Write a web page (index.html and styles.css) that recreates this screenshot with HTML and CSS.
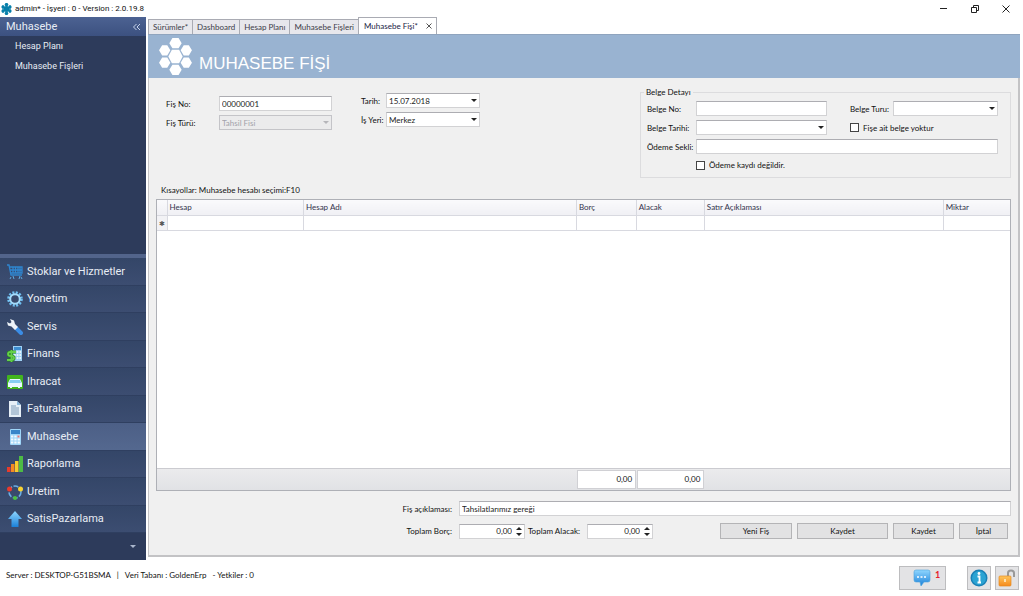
FILE: index.html
```html
<!DOCTYPE html>
<html lang="tr">
<head>
<meta charset="utf-8">
<title>admin* - İşyeri : 0 - Version : 2.0.19.8</title>
<link rel="stylesheet" href="styles.css">
</head>
<body>
<svg class="defs" aria-hidden="true">
  <defs>
    <linearGradient id="blue" x2="0" y2="1"><stop offset="0" stop-color="#8fd6ff"/><stop offset="1" stop-color="#1a80d8"/></linearGradient>
    <linearGradient id="orange" x2="0" y2="1"><stop offset="0" stop-color="#ffc65c"/><stop offset="1" stop-color="#f58a1c"/></linearGradient>
    <symbol id="hexes" viewBox="0 0 32 36">
      <path d="M12.500 11.500h7L23 18l-3.500 6.500h-7L9 18z"/>
      <path d="M13 0h6l3 5-3 5h-6l-3-5zM13 26h6l3 5-3 5h-6l-3-5zM3 7h5l3 5-3 5H3l-3-5zM3 19h5l3 5-3 5H3l-3-5zM24 7h5l3 5-3 5h-5l-3-5zM24 19h5l3 5-3 5h-5l-3-5z"/>
    </symbol>
  </defs>
</svg>
<header class="titlebar">
  <svg class="app-icon" viewBox="0 0 32 36" fill="#087faa"><circle cx="16" cy="18" r="9"/><use href="#hexes"/></svg>
  <span class="title">admin* - İşyeri : 0 - Version : 2.0.19.8</span>
  <button class="win" aria-label="Simge durumu"><svg viewBox="0 0 8 8"><path d="M0 3.500h7"/></svg></button>
  <button class="win" aria-label="Geri yükle"><svg viewBox="0 0 8 8"><path d="M.5 2.500h5v5h-5zM2.500 2.500v-2h5v5h-2"/></svg></button>
  <button class="win" aria-label="Kapat"><svg viewBox="0 0 8 8"><path d="M.5.500l7 7M7.500.500l-7 7"/></svg></button>
</header>

<div class="workspace">
  <nav class="sidebar">
    <div class="side-head"><span>Muhasebe</span><button class="collapse" aria-label="Daralt"><svg viewBox="0 0 8 8"><path d="M3.500 1l-3 3 3 3M7 1L4 4l3 3"/></svg></button></div>
    <div class="side-links">
      <a href="#hesap">Hesap Planı</a>
      <a href="#fisler">Muhasebe Fişleri</a>
    </div>
    <div class="modules">
      <a href="#stok"><svg viewBox="0 0 16 16"><path d="M0 1h2l2 10h11M2.500 3H15v6H4M6 3v6M8.500 3v6M11 3v6M13 3v6M3 6h12" fill="none" stroke="#2f86d0" stroke-width="1.300"/><path d="M4 13l-1 2M6 12l1 3M13 12l-1 3M14 13l1 2" stroke="#5ba9e0"/></svg>Stoklar ve Hizmetler</a>
      <a href="#yonetim"><svg viewBox="0 0 16 16" fill="none"><circle cx="8" cy="8" r="6.500" stroke="#6fc0f2" stroke-width="2.600" stroke-dasharray="2 1.400"/><circle cx="8" cy="8" r="4.800" stroke="#a5dcfb" stroke-width="2"/></svg>Yonetim</a>
      <a href="#servis"><svg viewBox="0 0 16 16"><path d="M9 9l5 5" stroke="#3b8de6" stroke-width="4" stroke-linecap="round"/><path d="M3 0l4 1.500 1 3.500 3 3-3 3-3.500-3.500L1 6.500 0 3l3 1.500L4.500 3z" fill="#eef3f8"/></svg>Servis</a>
      <a href="#finans"><svg viewBox="0 0 16 16"><path d="M6 0h9v15H6z" fill="#9fd0f3"/><path d="M7 1h7v3H7z" fill="#3d8ed2"/><path d="M7 6h7M7 9h7M7 12h7" stroke="#fff" stroke-width="1.500" stroke-dasharray="1.700 1"/><path d="M9 6H3.500Q1 6 1 8t3 2 3 2-3 2H0M4.500 4v12" fill="none" stroke="#247d22" stroke-width="3.200"/><path d="M9 6H3.500Q1 6 1 8t3 2 3 2-3 2H0M4.500 4v12" fill="none" stroke="#65cf4a" stroke-width="1.800"/></svg>Finans</a>
      <a href="#ihracat"><svg viewBox="0 0 16 16"><rect y="1" width="16" height="14" rx="1" fill="#42b51e"/><path d="M3 5h10l2 4v4h-2v1h-2v-1H5v1H3v-1H1V9z" fill="#e8f8ff"/><path d="M3 6h10l1 3H2z" fill="#86cdf2"/></svg>Ihracat</a>
      <a href="#faturalama"><svg viewBox="0 0 16 16"><path d="M2 0h8l4 4v12H2z" fill="#e6eff7"/><path d="M10 0v4h4z" fill="#8bb8dc"/><path d="M4 5h5M4 7h8M4 9h8M4 11h8M4 13h8" stroke="#7f9cb8"/></svg>Faturalama</a>
      <a href="#muhasebe" class="active" aria-current="page"><svg viewBox="0 0 16 16"><rect x="3" width="11" height="16" rx="1" fill="#9fd5f8"/><path d="M4 1h9v4H4z" fill="#3985c9"/><path d="M4 7.500h9M4 10.500h9M4 13.500h9" stroke="#f3faff" stroke-width="2" stroke-dasharray="2.300 1"/><path d="M10.500 6.500h2v2h-2z" fill="#e57676"/></svg>Muhasebe</a>
      <a href="#raporlama"><svg viewBox="0 0 16 16"><path d="M0 11h3.500v5H0z" fill="#e63c2c"/><path d="M4 8h3.500v8H4z" fill="#f48a21"/><path d="M8 5h3.500v11H8z" fill="#f7cb2e"/><path d="M12 0h4v16h-4z" fill="#4dbb45"/></svg>Raporlama</a>
      <a href="#uretim"><svg viewBox="0 0 16 16"><circle cx="8" cy="8" r="6" fill="none" stroke="#6aaee5" stroke-width="1.600" stroke-dasharray="5 1.500"/><circle cx="2.500" cy="5" r="2.500" fill="#e93a2d"/><circle cx="13.500" cy="5" r="2.500" fill="#f8d332"/><circle cx="8" cy="14" r="2" fill="#4cc13f"/></svg>Uretim</a>
      <a href="#satis"><svg viewBox="0 0 16 16"><path d="M8 0l7 8h-3.500v8h-7V8H1z" fill="url(#blue)"/></svg>SatisPazarlama</a>
    </div>
    <div class="side-foot"><button class="more" aria-label="Diğer"></button></div>
  </nav>

  <main class="content">
    <div class="tabs" role="tablist">
      <button role="tab">Sürümler*</button>
      <button role="tab">Dashboard</button>
      <button role="tab">Hesap Planı</button>
      <button role="tab">Muhasebe Fişleri</button>
      <button role="tab" class="current" aria-selected="true">Muhasebe Fişi*<svg viewBox="0 0 6 6"><path d="M.5.500l5 5M5.500.500l-5 5"/></svg></button>
    </div>
    <div class="banner">
      <svg viewBox="0 0 32 36" fill="#fff"><use href="#hexes"/></svg>
      <h1>MUHASEBE FİŞİ</h1>
    </div>
    <form class="panel">
      <div class="top">
        <div class="fields main-fields">
          <label for="no">Fiş No:</label><input id="no" value="00000001">
          <label for="tur">Fiş Türü:</label><span class="combo off"><select id="tur" disabled><option>Tahsil Fisi</option></select></span>
        </div>
        <div class="fields date-fields">
          <label for="tarih">Tarih:</label><span class="combo"><select id="tarih"><option>15.07.2018</option></select></span>
          <label for="yer">İş Yeri:</label><span class="combo"><select id="yer"><option>Merkez</option></select></span>
        </div>
        <fieldset class="detail">
          <legend>Belge Detayı</legend>
          <label for="bno">Belge No:</label><input id="bno">
          <label for="bturu" class="second">Belge Turu:</label><span class="combo"><select id="bturu"><option></option></select></span>
          <label for="btar">Belge Tarihi:</label><span class="combo"><select id="btar"><option></option></select></span>
          <label class="check second wide"><input type="checkbox">Fişe ait belge yoktur</label>
          <label for="odeme">Ödeme Sekli:</label><input id="odeme" class="span">
          <label class="check below"><input type="checkbox">Ödeme kaydı değildir.</label>
        </fieldset>
      </div>
      <p class="hint">Kısayollar: Muhasebe hesabı seçimi:F10</p>
      <div class="grid">
        <table>
          <colgroup><col class="c-mark"><col class="c-code"><col class="c-name"><col class="c-debit"><col class="c-credit"><col class="c-note"><col></colgroup>
          <thead><tr><th></th><th>Hesap</th><th>Hesap Adı</th><th>Borç</th><th>Alacak</th><th>Satır Açıklaması</th><th>Miktar</th></tr></thead>
          <tbody><tr><td class="mark">✱</td><td></td><td></td><td></td><td></td><td></td><td></td></tr></tbody>
        </table>
        <div class="totals"><output class="debit">0,00</output><output>0,00</output></div>
      </div>
      <div class="note-row">
        <label for="acik">Fiş açıklaması:</label><input id="acik" value="Tahsilatlarımız gereği">
      </div>
      <div class="bottom">
        <label for="tb">Toplam Borç:</label>
        <span class="spin"><input id="tb" value="0,00"><span><button type="button" class="up" aria-label="Artır"></button><button type="button" class="down" aria-label="Azalt"></button></span></span>
        <label for="ta">Toplam Alacak:</label>
        <span class="spin"><input id="ta" value="0,00"><span><button type="button" class="up" aria-label="Artır"></button><button type="button" class="down" aria-label="Azalt"></button></span></span>
        <div class="actions">
          <button type="button" class="b-new">Yeni Fiş</button>
          <button type="button" class="b-save">Kaydet</button>
          <button type="button" class="b-save2">Kaydet</button>
          <button type="button" class="b-cancel">İptal</button>
        </div>
      </div>
    </form>
  </main>
</div>

<footer class="status">
  <span>Server : DESKTOP-G51BSMA</span><span>|</span><span>Veri Tabanı : GoldenErp</span><span>- Yetkiler : 0</span>
  <button class="msg" aria-label="Mesajlar"><svg viewBox="0 0 18 18"><path d="M3 1h12q2 0 2 2v8q0 2-2 2h-4l-3 4-1-4H3q-2 0-2-2V3q0-2 2-2z" fill="url(#blue)" stroke="#4aa3dc" stroke-width=".6"/><path d="M4 8h10" stroke="#fff" stroke-width="1.500" stroke-dasharray="2 1.500"/></svg><b>1</b></button>
  <button class="sq info" aria-label="Bilgi"><svg viewBox="0 0 18 18"><circle cx="9" cy="9" r="8.500" fill="#197fb5"/><circle cx="9" cy="9" r="7" fill="#2ba3d3"/><circle cx="9" cy="4.500" r="1.400" fill="#fff"/><path d="M7.500 7.500h2v5.500M7.500 13.500h3.500" stroke="#fff" stroke-width="1.800" fill="none"/></svg></button>
  <button class="sq" aria-label="Kilit"><svg viewBox="0 0 18 18"><path d="M10 8V4q0-2.500 3-2.500T16 4v4" fill="none" stroke="#999" stroke-width="2"/><rect x="1" y="7" width="12" height="10" rx="1" fill="url(#orange)" stroke="#e58a20" stroke-width=".7"/><path d="M7 10v3" stroke="#fff2d5" stroke-width="1.500"/></svg></button>
</footer>
</body>
</html>
```

FILE: styles.css
```css
* { box-sizing: border-box; }

body {
  margin: 0;
  height: 100vh;
  display: flex;
  flex-direction: column;
  background: #fff;
  color: #111;
  font: 8px/10px Lato, "Liberation Sans", sans-serif;
}

button, input, select { font: inherit; color: inherit; margin: 0; padding: 0; border-radius: 0; }
button { border: 0; background: none; }
a { color: inherit; text-decoration: none; }
label { white-space: nowrap; }
svg { flex: none; }
.defs { position: absolute; width: 0; height: 0; }

/* window title */
.titlebar { display: flex; align-items: center; height: 17px; padding: 0 2px 0 1px; flex: none; }
.app-icon { width: 11px; height: 12px; margin-right: 3px; }
.title { flex: 1; font-family: Roboto, sans-serif; font-size: 8px; }
.win { width: 31px; height: 17px; display: grid; place-items: center; }
.win svg { width: 8px; height: 8px; fill: none; stroke: #222; }

.workspace { flex: 1; min-height: 0; display: flex; }

/* sidebar */
.sidebar {
  width: 146px;
  flex: none;
  display: flex;
  flex-direction: column;
  background: #2d3b5b;
  color: #e8edf5;
  font-family: Roboto, sans-serif;
}
.side-head {
  display: flex;
  align-items: center;
  justify-content: space-between;
  height: 19px;
  padding: 0 5px 0 6px;
  background: linear-gradient(#4c6292, #3c5180);
  font-size: 11px;
}
.collapse { display: grid; }
.collapse svg { width: 8px; height: 8px; fill: none; stroke: #c6d3ea; }
.side-links { flex: 1; padding-left: 15px; font-size: 9px; }
.side-links a { display: block; line-height: 20px; }
.modules { border-top: 4px solid #52648b; font-size: 11px; }
.modules a {
  display: flex;
  align-items: center;
  gap: 4px;
  height: 28px;
  padding-left: 7px;
  border-bottom: 1px solid #2f3f60;
  background: linear-gradient(#344668, #3c4d71);
}
.modules a:nth-child(even) { height: 27px; }
.modules a.active { background: linear-gradient(#4c5f86, #54688f); }
.modules svg { width: 16px; height: 16px; }
.side-foot { height: 27px; display: flex; align-items: center; justify-content: flex-end; padding-right: 10px; }
.more { border: solid transparent; border-width: 3px 3px 0; border-top-color: #aab6cc; }

/* tabs and banner */
.content { flex: 1; min-width: 0; display: flex; flex-direction: column; padding: 0 3px 3px 2px; }
.tabs { display: flex; align-items: flex-end; height: 17px; flex: none; }
.tabs button {
  height: 15px;
  padding: 0 4px;
  border: 1px solid #a9abb3;
  border-bottom: 0;
  margin-right: -1px;
  background: #e7e7ec;
  color: #3c3c48;
}
.tabs .current { height: 17px; background: #fff; color: #222244; display: flex; align-items: center; gap: 8px; padding: 0 4px 0 5px; }
.tabs svg { width: 6px; height: 6px; stroke: #555; stroke-width: 1; }
.banner { display: flex; height: 44px; flex: none; padding: 3px 11px; gap: 7px; background: #99b3d1; border-top: 1px solid #8fa4be; }
.banner svg { width: 33px; height: 37px; }
h1 { margin: 0; align-self: flex-end; color: #fff; font: 17px/22px "Liberation Sans", sans-serif; }

/* voucher form */
.panel {
  flex: 1;
  min-height: 0;
  display: flex;
  flex-direction: column;
  padding: 9px 7px 16px 7px;
  background: #f0f0f0;
  border: solid #c3c3c5;
  border-width: 0 2px 2px 1px;
}
.panel input:not([type]), .panel select {
  width: 100%;
  height: 15px;
  min-width: 0;
  padding: 0 2px;
  border: 1px solid #d2d2d4;
  border-top-color: #adadb2;
  background: #fff;
  color: #222;
  appearance: none;
}
.combo { display: grid; position: relative; }
.combo::after {
  content: "";
  position: absolute;
  right: 3px;
  top: 6px;
  border: solid transparent;
  border-width: 3px 3px 0;
  border-top-color: #222;
}
.combo.off::after { border-top-color: #b5b5b9; }
.panel .off select { background: #ebebec; border-color: #c4c4c8; color: #a2a2aa; opacity: 1; }

.top { display: flex; align-items: flex-start; }
.fields { display: grid; row-gap: 4px; align-items: center; }
.main-fields { grid-template-columns: 53px 113px; margin: 9px 0 0 10px; }
.date-fields { grid-template-columns: 25px 94px; margin: 6px 0 0 29px; }
.detail {
  display: grid;
  grid-template-columns: 49px 131px 1fr 105px;
  row-gap: 4px;
  align-items: center;
  width: 371px;
  margin: 0 0 0 auto;
  padding: 4px 12px 7px 6px;
  border: 1px solid #dcdcde;
}
legend { padding: 0 2px; margin-left: -3px; }
.second { padding-left: 23px; }
.wide { grid-column: span 2; }
.span { grid-column: span 3; }
.below { grid-column: 2 / span 3; padding-top: 2px; }
.check { display: flex; align-items: center; gap: 4px; }
.check input { appearance: none; width: 9px; height: 9px; border: 1px solid #444; background: #fff; }
.hint { margin: 7px 0 4px 5px; }

/* entry grid */
.grid { flex: 1; min-height: 0; display: flex; flex-direction: column; justify-content: space-between; background: #fff; border: 1px solid #aeb0b6; }
table { width: 100%; table-layout: fixed; border-collapse: collapse; }
.c-mark { width: 10px; }
.c-code { width: 16%; }
.c-name { width: 32%; }
.c-debit { width: 7%; }
.c-credit { width: 8%; }
.c-note { width: 28%; }
th, td { height: 15px; padding: 0 2px; border: solid #d8d9e0; border-width: 0 0 1px 1px; }
th:first-child, td:first-child { border-left: 0; }
th { text-align: left; font-weight: normal; color: #33334c; background: linear-gradient(#fafafc, #f0f0f4); }
.mark { padding: 0; text-align: center; font-size: 7px; color: #555; background: #f2f2f5; }
.totals {
  display: grid;
  grid-template-columns: 10px 16% 32% 7% 8%;
  height: 22px;
  padding: 1px 0;
  border-top: 1px solid #cbcbd0;
  background: linear-gradient(#ebebed, #e1e2e5);
}
.totals output { margin-left: 1px; padding-right: 3px; line-height: 17px; text-align: right; background: #fff; border: 1px solid #d0d0d4; }
.debit { grid-column: 4; }

.note-row { display: grid; grid-template-columns: 303px 1fr; align-items: center; margin-top: 10px; }
.note-row label, .bottom > label { text-align: right; padding-right: 7px; }
.bottom { display: grid; grid-template-columns: 303px 66px 62px 66px 1fr; align-items: center; margin-top: 7px; }
.spin { position: relative; display: grid; }
.panel .spin input { padding-right: 12px; text-align: right; }
.spin span { position: absolute; right: 3px; top: 3px; display: grid; gap: 3px; }
.spin button { border: solid transparent; border-width: 0 3px; }
.spin .up { border-bottom: 3px solid #222; }
.spin .down { border-top: 3px solid #222; }
.actions { display: flex; justify-content: flex-end; padding-right: 3px; }
.actions button { height: 16px; border: 1px solid #b4b4b6; background: #e2e2e3; }
.b-new { width: 72px; margin-right: 5px; }
.b-save { width: 91px; margin-right: 5px; }
.b-save2 { width: 61px; margin-right: 5px; }
.b-cancel { width: 49px; }

/* status bar */
.status { display: flex; align-items: center; height: 36px; flex: none; gap: 6px; padding: 0 4px 6px 6px; }
.status button { height: 24px; margin-top: 6px; border: 1px solid #bdbdbf; background: #e3e3e5; }
.status svg { width: 18px; height: 18px; }
.msg { display: flex; align-items: center; width: 47px; margin-left: auto; padding-left: 13px; gap: 4px; }
.msg b { color: #e8232a; font-size: 9px; align-self: flex-start; line-height: 16px; }
.sq { width: 24px; display: grid; place-items: center; }
.info { margin-left: 15px; }
.sq + .sq { margin-left: -2px; }
```
